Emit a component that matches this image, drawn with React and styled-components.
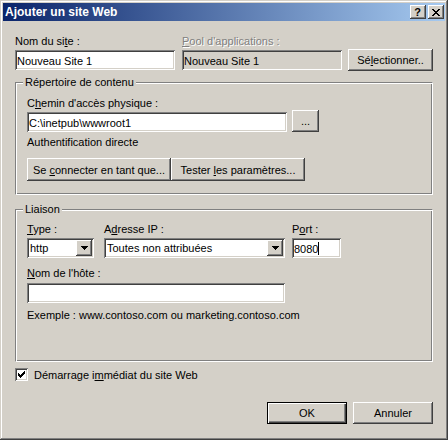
import React from 'react';
import styled, { createGlobalStyle } from 'styled-components';

const GlobalStyle = createGlobalStyle`
  html, body {
    margin: 0;
    padding: 0;
    background: #d4d0c8;
  }
  body {
    font-family: "Liberation Sans", Arial, sans-serif;
    font-size: 11px;
    color: #000;
  }
`;

const raised = `
  box-shadow: inset -1px -1px #404040, inset 1px 1px #fff, inset -2px -2px #808080;
`;

const sunken = `
  box-shadow: inset 1px 1px #808080, inset -1px -1px #fff, inset 2px 2px #404040, inset -2px -2px #d4d0c8;
`;

export default function App() {
  return (
    <>
      <GlobalStyle />
      <Window>
        <TitleBar>
          <Caption>Ajouter un site Web</Caption>
          <CaptionButton>?</CaptionButton>
          <CaptionButton>
            <CloseIcon />
          </CaptionButton>
        </TitleBar>

        <Body>
          <TopRow>
            <Field $width={160}>
              <Label>
                Nom du si<Key>t</Key>e :
              </Label>
              <TextBox>Nouveau Site 1</TextBox>
            </Field>
            <Field $width={160} $ml={7}>
              <Label $disabled>
                <Key>P</Key>ool d'applications :
              </Label>
              <TextBox $readOnly>Nouveau Site 1</TextBox>
            </Field>
            <SelectButton $width={85} $height={22}>
              Sé<Key>l</Key>ectionner..
            </SelectButton>
          </TopRow>

          <GroupBox $pb={13}>
            <Legend>Répertoire de contenu</Legend>
            <Label>
              C<Key>h</Key>emin d'accès physique :
            </Label>
            <PathRow>
              <TextBox $width={260} $tight>
                C:\inetpub\wwwroot1
              </TextBox>
              <Button $width={27} $height={22} $ml={5}>
                ...
              </Button>
            </PathRow>
            <Note $mt={4}>Authentification directe</Note>
            <ButtonRow>
              <Button $width={144} $height={23}>
                Se <Key>c</Key>onnecter en tant que...
              </Button>
              <Button $width={134} $height={23}>
                Tester <Key>l</Key>es paramètres...
              </Button>
            </ButtonRow>
          </GroupBox>

          <GroupBox $pb={39} $mt={8} $pt={7}>
            <Legend>Liaison</Legend>
            <BindingRow>
              <Field $width={67}>
                <Label>
                  <Key>T</Key>ype :
                </Label>
                <Select $width={67}>
                  <SelectValue>http</SelectValue>
                  <DropButton>
                    <DownArrow />
                  </DropButton>
                </Select>
              </Field>
              <Field $width={181} $ml={10}>
                <Label>
                  A<Key>d</Key>resse IP :
                </Label>
                <Select $width={181}>
                  <SelectValue>Toutes non attribuées</SelectValue>
                  <DropButton>
                    <DownArrow />
                  </DropButton>
                </Select>
              </Field>
              <Field $width={49} $ml={7}>
                <Label>
                  P<Key>o</Key>rt :
                </Label>
                <TextBox>
                  8080
                  <Caret />
                </TextBox>
              </Field>
            </BindingRow>
            <Field $width={258} $gap={3} $mt={9}>
              <Label>
                <Key>N</Key>om de l'hôte :
              </Label>
              <TextBox />
            </Field>
            <Note $mt={6}>Exemple : www.contoso.com ou marketing.contoso.com</Note>
          </GroupBox>

          <CheckRow>
            <CheckBox>
              <CheckMark />
            </CheckBox>
            <CheckLabel>
              Démarrage i<Key>m</Key>médiat du site Web
            </CheckLabel>
          </CheckRow>

          <Footer>
            <Button $width={80} $height={22} $default>
              OK
            </Button>
            <Button $width={80} $height={22}>
              Annuler
            </Button>
          </Footer>
        </Body>
      </Window>
    </>
  );
}

function CloseIcon() {
  const rows = [0, 1, 2, 3, 4, 5, 6];
  return (
    <svg width="8" height="7" viewBox="0 0 8 7" shapeRendering="crispEdges">
      {rows.map((i) => (
        <g key={i} fill="#000">
          <rect x={i < 4 ? i : i + 1 - 1} y={i} width="2" height="1" />
          <rect x={6 - i} y={i} width="2" height="1" />
        </g>
      ))}
    </svg>
  );
}

function DownArrow() {
  return (
    <svg width="7" height="4" viewBox="0 0 7 4" shapeRendering="crispEdges">
      <rect x="0" y="0" width="7" height="1" fill="#000" />
      <rect x="1" y="1" width="5" height="1" fill="#000" />
      <rect x="2" y="2" width="3" height="1" fill="#000" />
      <rect x="3" y="3" width="1" height="1" fill="#000" />
    </svg>
  );
}

function CheckMark() {
  const px = [
    [6, 0], [5, 1], [6, 1], [0, 2], [4, 2], [5, 2], [6, 2],
    [0, 3], [1, 3], [3, 3], [4, 3], [5, 3],
    [0, 4], [1, 4], [2, 4], [3, 4], [4, 4],
    [1, 5], [2, 5], [3, 5], [2, 6],
  ];
  return (
    <svg width="7" height="7" viewBox="0 0 7 7" shapeRendering="crispEdges">
      {px.map(([x, y]) => (
        <rect key={`${x}-${y}`} x={x} y={y} width="1" height="1" fill="#000" />
      ))}
    </svg>
  );
}

const Window = styled.div`
  width: 448px;
  height: 440px;
  box-sizing: border-box;
  padding: 3px;
  background: #d4d0c8;
  box-shadow: inset -1px -1px #404040, inset 1px 1px #d4d0c8,
    inset -2px -2px #808080, inset 2px 2px #fff;
  display: flex;
  flex-direction: column;
`;

const TitleBar = styled.div`
  height: 18px;
  display: flex;
  align-items: center;
  gap: 2px;
  padding: 0 1px 0 2px;
  background: linear-gradient(to right, #0a246a, #a6caf0);
`;

const Caption = styled.div`
  flex: 1;
  color: #fff;
  font-weight: bold;
  font-size: 12px;
  line-height: 18px;
  white-space: nowrap;
`;

const CaptionButton = styled.div`
  width: 16px;
  height: 14px;
  box-sizing: border-box;
  display: flex;
  align-items: center;
  justify-content: center;
  background: #d4d0c8;
  font-weight: bold;
  font-size: 11px;
  line-height: 14px;
  padding-right: 1px;
  ${raised}
`;

const Body = styled.div`
  display: flex;
  flex-direction: column;
  padding: 14px 12px 0;
`;

const TopRow = styled.div`
  display: flex;
  align-items: flex-end;
`;

const Field = styled.div`
  display: flex;
  flex-direction: column;
  gap: ${(p) => p.$gap ?? 2}px;
  width: ${(p) => p.$width}px;
  margin-left: ${(p) => p.$ml ?? 0}px;
  margin-top: ${(p) => p.$mt ?? 0}px;
`;

const Label = styled.div`
  line-height: 13px;
  white-space: nowrap;
  color: ${(p) => (p.$disabled ? '#808080' : '#000')};
  text-shadow: ${(p) => (p.$disabled ? '1px 1px 0 #fff' : 'none')};
`;

const Key = styled.u`
  text-underline-offset: 1px;
`;

const TextBox = styled.div`
  width: ${(p) => (p.$width ? `${p.$width}px` : 'auto')};
  height: 20px;
  box-sizing: border-box;
  padding: 3px 2px 0 ${(p) => (p.$tight ? 2 : 2)}px;
  line-height: 16px;
  white-space: nowrap;
  overflow: hidden;
  background: ${(p) => (p.$readOnly ? '#d4d0c8' : '#fff')};
  ${sunken}
`;

const Caret = styled.span`
  display: inline-block;
  width: 1px;
  height: 13px;
  background: #000;
  vertical-align: -2px;
`;

const Button = styled.button`
  width: ${(p) => p.$width}px;
  height: ${(p) => p.$height}px;
  margin: 0 0 0 ${(p) => p.$ml ?? 0}px;
  box-sizing: border-box;
  padding: 0;
  background: #d4d0c8;
  font: inherit;
  color: #000;
  white-space: nowrap;
  border: ${(p) => (p.$default ? '1px solid #000' : 'none')};
  ${(p) =>
    p.$default
      ? 'box-shadow: inset 1px 1px #fff, inset -1px -1px #404040, inset -2px -2px #808080;'
      : raised}
`;

const SelectButton = styled(Button)`
  margin: 0 0 -1px 6px;
`;

const GroupBox = styled.fieldset`
  margin: ${(p) => p.$mt ?? 6}px 0 0;
  padding: ${(p) => p.$pt ?? 8}px 11px ${(p) => p.$pb}px;
  min-width: 0;
  border: 1px solid;
  border-color: #808080 #fff #fff #808080;
  box-shadow: inset 1px 1px #fff, inset -1px -1px #808080;
`;

const Legend = styled.legend`
  margin-left: -4px;
  padding: 0 2px;
  line-height: 13px;
  background: #d4d0c8;
`;

const PathRow = styled.div`
  display: flex;
  align-items: flex-end;
`;

const Note = styled.div`
  line-height: 13px;
  margin-top: ${(p) => p.$mt}px;
  white-space: nowrap;
`;

const ButtonRow = styled.div`
  display: flex;
  margin-top: 9px;
`;

const BindingRow = styled.div`
  display: flex;
  align-items: flex-end;
`;

const Select = styled.div`
  width: ${(p) => p.$width}px;
  height: 20px;
  box-sizing: border-box;
  padding: 2px;
  display: flex;
  background: #fff;
  ${sunken}
`;

const SelectValue = styled.div`
  flex: 1;
  padding: 1px 0 0 1px;
  line-height: 15px;
  white-space: nowrap;
  overflow: hidden;
`;

const DropButton = styled.div`
  width: 16px;
  height: 16px;
  display: flex;
  align-items: center;
  justify-content: center;
  background: #d4d0c8;
  ${raised}
`;

const CheckRow = styled.div`
  display: flex;
  align-items: flex-start;
  gap: 6px;
  margin-top: 6px;
`;

const CheckBox = styled.div`
  width: 13px;
  height: 13px;
  box-sizing: border-box;
  display: flex;
  align-items: center;
  justify-content: center;
  background: #fff;
  ${sunken}
`;

const CheckLabel = styled.div`
  line-height: 13px;
  margin-top: 1px;
`;

const Footer = styled.div`
  display: flex;
  justify-content: flex-end;
  gap: 6px;
  margin-top: 20px;
`;
